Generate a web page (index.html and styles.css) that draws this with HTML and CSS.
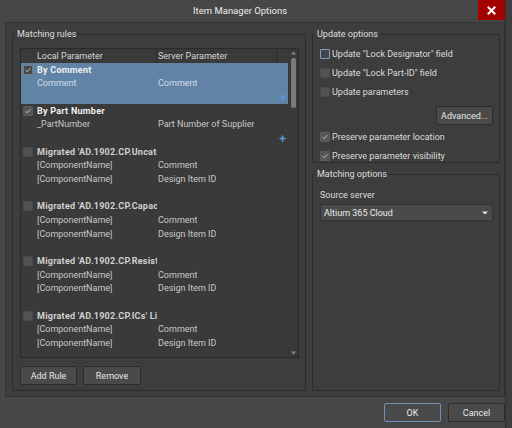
FILE: index.html
```html
<!DOCTYPE html>
<html>
<head>
<meta charset="utf-8">
<title>Item Manager Options</title>
<link rel="stylesheet" href="styles.css">
</head>
<body>
<div class="window">
  <div class="titlebar">
    <span class="title">Item Manager Options</span>
    <div class="close"><svg width="9" height="9" viewBox="0 0 9 9"><path d="M1.5 1.5L7.5 7.5M7.5 1.5L1.5 7.5" stroke="#fff" stroke-width="2" stroke-linecap="square"/></svg></div>
  </div>
  <div class="panel">
    <fieldset class="group rules">
      <legend>Matching rules</legend>
      <div class="list">
        <div class="list-main">
          <div class="header">
            <div class="hc c1">Local Parameter</div>
            <div class="hc c2">Server Parameter</div>
            <div class="hc c3"></div>
          </div>
          <div class="rule selected">
            <div class="row trow"><span class="cb checked"><svg width="8" height="8" viewBox="0 0 8 8"><path d="M1.6 4.2L3.2 5.7L6.4 2.3" fill="none" stroke="#c8c8c8" stroke-width="1"/></svg></span><span class="name">By Comment</span></div>
            <div class="row"><span class="c1">Comment</span><span class="c2">Comment</span></div>
            <div class="row prow"><svg class="plus" width="7" height="7" viewBox="0 0 7 7"><path d="M3.5 0.5V6.5M0.5 3.5H6.5" stroke="#5a9ae6" stroke-width="1.6"/></svg></div>
          </div>
          <div class="rule">
            <div class="row trow"><span class="cb checked"><svg width="8" height="8" viewBox="0 0 8 8"><path d="M1.6 4.2L3.2 5.7L6.4 2.3" fill="none" stroke="#c8c8c8" stroke-width="1"/></svg></span><span class="name">By Part Number</span></div>
            <div class="row"><span class="c1">_PartNumber</span><span class="c2">Part Number of Supplier</span></div>
            <div class="row prow"><svg class="plus" width="7" height="7" viewBox="0 0 7 7"><path d="M3.5 0.5V6.5M0.5 3.5H6.5" stroke="#5a9ae6" stroke-width="1.6"/></svg></div>
          </div>
          <div class="rule">
            <div class="row trow"><span class="cb"></span><span class="name dim">Migrated 'AD.1902.CP.Uncategorized' Library</span></div>
            <div class="row"><span class="c1">[ComponentName]</span><span class="c2">Comment</span></div>
            <div class="row"><span class="c1">[ComponentName]</span><span class="c2">Design Item ID</span></div>
            <div class="row"></div>
          </div>
          <div class="rule">
            <div class="row trow"><span class="cb"></span><span class="name dim">Migrated 'AD.1902.CP.Capacitors' Library</span></div>
            <div class="row"><span class="c1">[ComponentName]</span><span class="c2">Comment</span></div>
            <div class="row"><span class="c1">[ComponentName]</span><span class="c2">Design Item ID</span></div>
            <div class="row"></div>
          </div>
          <div class="rule">
            <div class="row trow"><span class="cb"></span><span class="name dim">Migrated 'AD.1902.CP.Resistors' Library</span></div>
            <div class="row"><span class="c1">[ComponentName]</span><span class="c2">Comment</span></div>
            <div class="row"><span class="c1">[ComponentName]</span><span class="c2">Design Item ID</span></div>
            <div class="row"></div>
          </div>
          <div class="rule">
            <div class="row trow"><span class="cb"></span><span class="name dim">Migrated 'AD.1902.CP.ICs' Library</span></div>
            <div class="row"><span class="c1">[ComponentName]</span><span class="c2">Comment</span></div>
            <div class="row"><span class="c1">[ComponentName]</span><span class="c2">Design Item ID</span></div>
            <div class="row"></div>
          </div>
        </div>
        <div class="scrollbar">
          <svg class="arrow-up" width="5" height="4" viewBox="0 0 5 4"><path d="M2.5 0.5L5 3.5H0Z" fill="#8a8a8a"/></svg>
          <div class="thumb"></div>
          <div class="track-fill"></div>
          <svg class="arrow-down" width="5" height="4" viewBox="0 0 5 4"><path d="M0 0.5H5L2.5 3.5Z" fill="#8a8a8a"/></svg>
        </div>
      </div>
      <div class="btnrow">
        <button class="btn w57">Add Rule</button>
        <button class="btn w58">Remove</button>
      </div>
    </fieldset>
    <div class="right">
      <fieldset class="group update">
        <legend>Update options</legend>
        <div class="opt"><span class="cb focus"></span><span>Update "Lock Designator" field</span></div>
        <div class="opt"><span class="cb"></span><span>Update "Lock Part-ID" field</span></div>
        <div class="opt"><span class="cb"></span><span>Update parameters</span></div>
        <div class="advrow"><button class="btn w57">Advanced...</button></div>
        <div class="opt"><span class="cb checked"><svg width="8" height="8" viewBox="0 0 8 8"><path d="M1.6 4.2L3.2 5.7L6.4 2.3" fill="none" stroke="#c8c8c8" stroke-width="1"/></svg></span><span>Preserve parameter location</span></div>
        <div class="opt"><span class="cb checked"><svg width="8" height="8" viewBox="0 0 8 8"><path d="M1.6 4.2L3.2 5.7L6.4 2.3" fill="none" stroke="#c8c8c8" stroke-width="1"/></svg></span><span>Preserve parameter visibility</span></div>
      </fieldset>
      <fieldset class="group matching">
        <legend>Matching options</legend>
        <div class="srclabel">Source server</div>
        <div class="dropdown"><span>Altium 365 Cloud</span><svg width="6" height="4" viewBox="0 0 6 4"><path d="M0 0.5H6L3 3.5Z" fill="#e6e6e6"/></svg></div>
      </fieldset>
    </div>
  </div>
  <div class="footer">
    <button class="btn ok">OK</button>
    <button class="btn">Cancel</button>
  </div>
</div>
</body>
</html>
```
FILE: styles.css
```css
* { box-sizing: border-box; }
html, body { margin: 0; padding: 0; }
body {
  width: 512px;
  height: 428px;
  overflow: hidden;
  background: #3f3f3f;
  font-family: Roboto, "Noto Sans", sans-serif;
  font-size: 9px;
  color: #dcdcdc;
}
.window {
  width: 506px;
  height: 428px;
  background: #474747;
  border-right: 1px solid #2f2f2f;
  display: flex;
  flex-direction: column;
}
.titlebar {
  height: 22px;
  flex: none;
  display: flex;
  align-items: flex-start;
}
.title {
  margin-left: 193px;
  margin-top: 5px;
  font-size: 9.5px;
  line-height: 12px;
  color: #ececec;
}
.close {
  margin-left: auto;
  width: 27px;
  height: 20px;
  background: #a30000;
  display: flex;
  align-items: center;
  justify-content: center;
}
.panel {
  flex: none;
  margin-left: 5px;
  width: 500px;
  height: 375px;
  border: 1px solid #333;
  background: #3d3d3d;
  display: flex;
  gap: 6px;
  padding: 5px 4px 5px 6px;
}
.group {
  margin: 0;
  border: 1px solid #2c2c2c;
  min-width: 0;
}
.group legend {
  margin-left: -5px;
  padding: 0 2px;
  line-height: 12px;
  height: 12px;
  color: #dedede;
}
.rules {
  width: 294px;
  padding: 8px 6px 5px 7px;
  display: flex;
  flex-direction: column;
  gap: 8px;
}
.list {
  height: 310px;
  border: 1px solid #2a2a2a;
  background: #3a3a3a;
  display: flex;
  flex: none;
}
.list-main {
  flex: 1;
  overflow: hidden;
}
.header {
  height: 14px;
  display: flex;
  align-items: stretch;
  line-height: 14px;
  color: #d6d6d6;
}
.hc { white-space: nowrap; overflow: hidden; }
.header .c1 { width: 136px; padding-left: 16px; border-right: 1px solid #2c2c2c; }
.header .c2 { width: 120px; padding-left: 1px; border-right: 1px solid #2c2c2c; }
.header .c3 { flex: 1; }
.rule.selected { background: #6183a6; }
.row {
  height: 13.67px;
  display: flex;
  align-items: center;
  white-space: nowrap;
  color: #c8c8c8;
}
.row .c1 { width: 137px; padding-left: 16px; overflow: hidden; }
.row .c2 { padding-left: 0; overflow: hidden; }
.selected .row { color: #d4dde6; }
.trow .cb { margin-left: 2px; margin-right: 4px; }
.name {
  width: 120px;
  overflow: hidden;
  font-weight: bold;
  letter-spacing: 0.25px;
  color: #f0f0f0;
}
.name.dim { color: #d0d0d0; }
.prow { justify-content: flex-end; padding-right: 2px; }
.cb {
  flex: none;
  width: 10px;
  height: 10px;
  background: #525252;
  border: 1px solid #4a4a4a;
  border-radius: 1px;
  display: inline-flex;
  align-items: center;
  justify-content: center;
}
.cb.checked { background: #555; border-color: #5c5c5c; }
.selected .cb { background: #4a4a4a; border-color: #7a7a7a; }
.cb.focus { background: #454545; border-color: #7d9fc5; }
.scrollbar {
  width: 10px;
  flex: none;
  display: flex;
  flex-direction: column;
  align-items: center;
  background: #393939;
}
.arrow-up { margin-top: 2px; flex: none; }
.thumb {
  margin-top: 3px;
  width: 5px;
  height: 50px;
  border-radius: 2px;
  background: #7a7a7a;
  flex: none;
}
.track-fill { flex: 1; }
.arrow-down { margin-bottom: 2px; flex: none; }
.btnrow { display: flex; gap: 6px; }
.btn {
  height: 19px;
  margin: 0;
  padding: 0;
  background: #4a4a4a;
  border: 1px solid #2c2c2c;
  border-radius: 2px;
  color: #e8e8e8;
  font-family: Roboto, "Noto Sans", sans-serif;
  font-size: 9px;
  text-align: center;
}
.w57 { width: 57px; }
.w58 { width: 58px; }
.right {
  width: 188px;
  display: flex;
  flex-direction: column;
  gap: 5px;
}
.update {
  height: 135px;
  flex: none;
  padding: 8px 6px 0 7px;
  display: flex;
  flex-direction: column;
}
.opt {
  height: 12px;
  display: flex;
  align-items: center;
  gap: 2px;
  color: #dcdcdc;
  white-space: nowrap;
  margin-bottom: 7px;
}
.advrow {
  display: flex;
  justify-content: flex-end;
  margin-top: 1px;
  margin-bottom: 6px;
}
.matching {
  flex: 1;
  padding: 9px 6px 0 7px;
}
.srclabel {
  line-height: 12px;
  color: #dcdcdc;
}
.dropdown {
  margin-top: 3px;
  height: 17px;
  border: 1px solid #333;
  border-radius: 2px;
  background: #4a4a4a;
  display: flex;
  align-items: center;
  justify-content: space-between;
  padding: 0 4px 0 3px;
  color: #ececec;
}
.footer {
  flex: 1;
  display: flex;
  justify-content: flex-end;
  align-items: flex-start;
  gap: 7px;
  padding-top: 6px;
}
.footer .btn { width: 57px; }
.footer .btn.ok { border-color: #6f91b5; }
```
